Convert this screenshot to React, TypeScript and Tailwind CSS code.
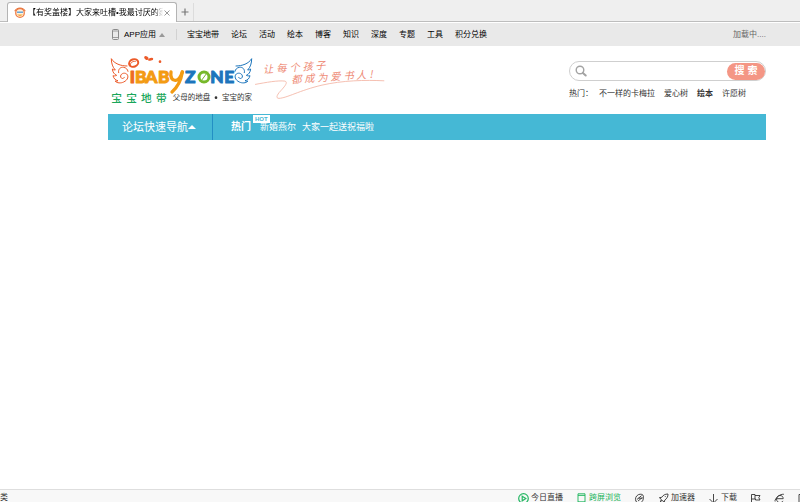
import { useState } from "react";
import type { ReactNode } from "react";

const channels = ["宝宝地带", "论坛", "活动", "绘本", "博客", "知识", "深度", "专题", "工具", "积分兑换"];

const hotWords = [
  { label: "不一样的卡梅拉", bold: false },
  { label: "爱心树", bold: false },
  { label: "绘本", bold: true },
  { label: "许愿树", bold: false }
];

export default function App() {
  return (
    <div className="flex h-screen flex-col overflow-hidden bg-white font-['Liberation_Sans','Noto_Sans_CJK_SC',sans-serif] text-[8px] leading-3 text-[#333]">
      <TabStrip />
      <TopNav />
      <main className="flex-1 pr-[34px] pl-[108px]">
        <Header />
        <ForumBar />
      </main>
      <StatusBar />
    </div>
  );
}

function TabStrip() {
  return (
    <div className="flex h-[22px] shrink-0 items-end border-b border-[#bdbdbd] bg-[#efefef] pl-[7px]">
      <div className="-mb-px flex h-5 w-[170px] items-center rounded-t-[3px] border border-b-0 border-[#b4b4b4] bg-white pr-[5px] pl-[6px]">
        <Favicon />
        <span className="ml-[2px] flex-1 overflow-hidden whitespace-nowrap text-black [mask-image:linear-gradient(to_right,black_94%,transparent)]">
          【有奖盖楼】大家来吐槽•我最讨厌的家
        </span>
        <button aria-label="关闭标签" className="shrink-0">
          <svg viewBox="0 0 8 8" className="size-2" stroke="#999" fill="none">
            <path d="M1.5 1.5l5 5M6.5 1.5l-5 5" />
          </svg>
        </button>
      </div>
      <button aria-label="新建标签" className="flex h-[18px] w-[17px] items-center justify-center border-r border-[#dcdcdc]">
        <svg viewBox="0 0 8 8" className="size-2" stroke="#777" strokeWidth="1.2" fill="none">
          <path d="M4 .5v7M.5 4h7" />
        </svg>
      </button>
    </div>
  );
}

function Favicon() {
  return (
    <svg viewBox="0 0 12 12" className="size-3 shrink-0" fill="none">
      <circle cx="6" cy="6" r="4.3" fill="#fff1df" stroke="#ef7d45" strokeWidth="1.3" />
      <path d="M.8 4.2C2 1.8 4 1 6 1s4 .8 5.2 3.2" stroke="#e8743b" strokeWidth="1.2" />
      <path d="M3 5.2h6" stroke="#5a9fd4" strokeWidth="1.4" />
      <path d="M3 7.6c1.5 1.8 4.5 1.8 6 0z" fill="#f3a32f" />
    </svg>
  );
}

function TopNav() {
  return (
    <nav className="mt-px flex h-[23px] shrink-0 items-center bg-[#e9e9e9] pr-[34px] pl-[112px] text-black">
      <a href="#app" className="flex items-center">
        <svg viewBox="0 0 7 11" className="h-[11px] w-[7px]" fill="none" stroke="#8a8a8a">
          <rect x=".5" y=".5" width="6" height="10" rx="1" />
          <path d="M.5 2h6M.5 8.5h6" strokeWidth=".8" />
        </svg>
        <span className="ml-[5px]">APP应用</span>
        <svg viewBox="0 0 6 4" className="ml-[3px] h-1 w-1.5" fill="#999">
          <path d="M3 0l3 4H0z" />
        </svg>
      </a>
      <span className="mr-[10px] ml-[11px] h-[11px] w-px bg-[#d2d2d2]" />
      <div className="flex gap-3">
        {channels.map((name) => (
          <a key={name} href="#channel">
            {name}
          </a>
        ))}
      </div>
      <span className="ml-auto text-[#666]">加载中....</span>
    </nav>
  );
}

function Header() {
  const [query, setQuery] = useState("");

  return (
    <header className="flex h-[68px] items-start pt-[2px]">
      <a href="#home" aria-label="iBabyZone 宝宝地带">
        <Logo />
      </a>
      <Slogan />
      <div className="mt-[13px] ml-auto w-[197px]">
        <form
          onSubmit={(event) => event.preventDefault()}
          className="flex h-5 items-center rounded-full border border-[#cfcfcf] bg-white pl-[5px]"
        >
          <svg viewBox="0 0 12 12" className="size-3 shrink-0" fill="none" stroke="#a3a3a3">
            <circle cx="5" cy="5" r="3.8" strokeWidth="1.4" />
            <path d="M7.9 7.9l2.8 2.6" strokeWidth="2" strokeLinecap="round" />
          </svg>
          <input
            aria-label="搜索"
            value={query}
            onChange={(event) => setQuery(event.target.value)}
            className="ml-1 min-w-0 flex-1 outline-none"
          />
          <button className="h-[17px] w-[38px] shrink-0 rounded-full bg-[#f49685] text-[10px] font-bold text-white">搜 索</button>
        </form>
        <div className="mt-[7px] flex whitespace-nowrap text-[#333]">
          <span className="w-[30px]">热门：</span>
          <div className="flex gap-[9px]">
            {hotWords.map((word) => (
              <a key={word.label} href="#search" className={word.bold ? "font-bold" : ""}>
                {word.label}
              </a>
            ))}
          </div>
        </div>
      </div>
    </header>
  );
}

function Logo() {
  return (
    <svg viewBox="24 0 438 180" className="h-[60px] w-[146px]" fill="none" strokeLinecap="round" strokeLinejoin="round">
      <g stroke="#ec5a29" strokeWidth="3">
        <path d="M81 54C62 54 43 47 34 32c0 14 4 26 12 34-4 0-7-1-9-3 1 10 6 16 13 19-4 2-8 2-11 1 2 9 8 14 15 15-3 2-6 2-9 1 6 7 18 7 26 3 13-6 16-18 9-24-8-6-20 0-18 9 2 6 9 6 11 1" />
        <path d="M56 74c-3-9 5-18 15-16 7 1 12 6 13 12" />
      </g>
      <g stroke="#1c75bc" strokeWidth="3">
        <path d="M408 54c19 0 38-7 47-22 0 14-4 26-12 34 4 0 7-1 9-3-1 10-6 16-13 19 4 2 8 2 11 1-2 9-8 14-15 15 3 2 6 2 9 1-6 7-18 7-26 3-13-6-16-18-9-24 8-6 20 0 18 9-2 6-9 6-11 1" />
        <path d="M433 74c3-9-5-18-15-16-7 1-12 6-13 12" />
      </g>
      <ellipse cx="101" cy="45" rx="14" ry="11" transform="rotate(-20 101 45)" stroke="#ec5a29" strokeWidth="6" />
      <path d="M91 54c-2-8 5-15 15-14" stroke="#ec5a29" strokeWidth="3" />
      <g fill="#ec5a29">
        <ellipse cx="139" cy="30" rx="7" ry="5" transform="rotate(30 139 30)" />
        <ellipse cx="152" cy="34" rx="8" ry="4" transform="rotate(-15 152 34)" />
        <circle cx="180" cy="41" r="4" />
      </g>
      <g className="font-['Lato',sans-serif] font-black" fontSize="52" strokeWidth="3">
        <text y="105" fill="#ee6a25" stroke="#ee6a25">
          <tspan x="89">I</tspan>
        </text>
        <text y="105" fill="#f39b13" stroke="#f39b13">
          <tspan x="105">B</tspan>
          <tspan x="136">A</tspan>
          <tspan x="174">B</tspan>
        </text>
        <text y="105" fill="#1c75bc" stroke="#1c75bc">
          <tspan x="255">Z</tspan>
          <tspan x="331">N</tspan>
          <tspan x="373">E</tspan>
        </text>
      </g>
      {/* the long-tailed Y and the leaf-like O are drawn by hand */}
      <path d="M213 72c-3 16 4 26 14 25 9-1 15-10 20-25" stroke="#f39b13" strokeWidth="10" />
      <path d="M247 72c-4 25-14 45-31 60" stroke="#f39b13" strokeWidth="10" />
      <ellipse cx="312" cy="87" rx="15" ry="15" stroke="#76b82a" strokeWidth="9" />
      <path d="M304 98l19-26" stroke="#76b82a" strokeWidth="3" />
      <g className="font-['Noto_Sans_CJK_SC',sans-serif]">
        <text y="161" fontSize="32" fontWeight="500" fill="#19a65a">
          <tspan x="34">宝</tspan>
          <tspan x="79">宝</tspan>
          <tspan x="123">地</tspan>
          <tspan x="168">带</tspan>
        </text>
        <text y="157" fontSize="22.5" fill="#333">
          <tspan x="218">父母的地盘</tspan>
          <tspan x="366">宝宝的家</tspan>
        </text>
      </g>
      <circle cx="348" cy="149" r="4" fill="#333" />
    </svg>
  );
}

function Slogan() {
  return (
    <svg viewBox="12 0 408 160" className="mt-[2px] h-[53px] w-[136px]" fill="none">
      <g className="font-['Noto_Sans_CJK_SC',sans-serif]" fontSize="31" fontWeight="400" fontStyle="italic" fill="#ee8974">
        <text y="70" transform="rotate(-4 42 70)">
          <tspan x="39">让</tspan>
          <tspan x="79">每</tspan>
          <tspan x="119">个</tspan>
          <tspan x="158">孩</tspan>
          <tspan x="197">子</tspan>
        </text>
        <text y="101" transform="rotate(-4 126 101)">
          <tspan x="124">都</tspan>
          <tspan x="163">成</tspan>
          <tspan x="203">为</tspan>
          <tspan x="242">爱</tspan>
          <tspan x="282">书</tspan>
          <tspan x="320">人</tspan>
          <tspan x="360">!</tspan>
        </text>
      </g>
      <path
        d="M14 104c32-6 70-13 90-10 12 3-4 20-17 34-8 10-10 18-1 18 24-1 62-24 130-40 62-14 130-16 188-13"
        stroke="#f3b3a2"
        strokeWidth="2.5"
      />
    </svg>
  );
}

function ForumBar() {
  return (
    <div className="flex h-[26px] items-center bg-[#45b8d5] text-[9px] text-white">
      <button className="flex h-full w-[105px] items-center border-r border-[#238fc4] pl-[14px] text-[11px]">
        论坛快速导航
        <svg viewBox="0 0 8 4" className="h-1 w-2" fill="#fff">
          <path d="M4 0l4 4H0z" />
        </svg>
      </button>
      <strong className="ml-[18px] text-[10px]">热门</strong>
      <a href="#wedding" className="relative ml-[9px]">
        新婚燕尔
        <span className="absolute -top-[6px] -left-[7px] h-2 bg-white px-[2px] text-[6px] leading-2 font-bold text-[#45b8d5]">HOT</span>
      </a>
      <a href="#blessing" className="ml-[6px]">
        大家一起送祝福啦
      </a>
    </div>
  );
}

function StatusItem({ icon, label, title, green }: { icon: ReactNode; label?: string; title?: string; green?: boolean }) {
  return (
    <button aria-label={label ?? title} className={green ? "flex items-center gap-[2px] text-[#19b45a]" : "flex items-center gap-[2px]"}>
      <svg viewBox="0 0 11 11" className="size-[11px] shrink-0" fill="none" stroke="currentColor" strokeWidth=".9">
        {icon}
      </svg>
      {label}
    </button>
  );
}

function StatusBar() {
  return (
    <footer className="flex h-[13px] shrink-0 items-start justify-between overflow-hidden border-t border-[#dedede] bg-[#f8f8f8] pt-[2px] whitespace-nowrap text-[#333]">
      <span>类</span>
      <div className="-mr-[9px] flex gap-[13px]">
        <StatusItem
          label="今日直播"
          icon={
            <g stroke="#27b765" strokeWidth="1.2">
              <circle cx="5.5" cy="5.5" r="4.8" />
              <path d="M4.2 3.2l3.6 2.3-3.6 2.3z" />
            </g>
          }
        />
        <StatusItem label="跨屏浏览" green icon={<path d="M2 .8h7v9.6H2zM2 2.4h7M2 8.8h7" />} />
        <StatusItem
          title="手势"
          icon={<path d="M2 8.5C.8 6 1.7 3 4.3 1.7 6.6.6 9.5 1.3 9.5 3.6c0 3-1 6.2-4 6.2-1.5 0-2.7-.5-3.5-1.3zM2.8 6.6l4.8-4M4 8l4.5-3.6M4.5 5.2h4" />}
        />
        <StatusItem
          label="加速器"
          icon={<path d="M10 1c-3 0-5 1.2-6.2 3.3l-2.4.4 1.9 1.6L2.8 8l1.9-.4 1.5 1.9.6-2.5C9 5.6 10 3.8 10 1zM1 10l2.2-2.2M7 3.2l.9.9" />}
        />
        <StatusItem label="下载" icon={<path d="M5.5 1v9M1.5 6l4 4 4-4" />} />
        <StatusItem title="旗标" icon={<path d="M1.5 10.5V1.5H5v1h5L8.8 4.7 10 7H5.5V6h-4M5 2.5V6" />} />
        <StatusItem
          title="兼容模式"
          icon={<path d="M2.8 5.7h6.4c0-2-1.3-3.2-3.2-3.2S2.5 4 2.5 6 4 9.6 6 9.6c1.4 0 2.4-.6 3-1.7M1.2 8.5C-.2 7 5.5.3 10 1.4" />}
        />
        <StatusItem title="窗口" icon={<path d="M1 1.5h9v8H1zM3.5 1.5v8" />} />
      </div>
    </footer>
  );
}
